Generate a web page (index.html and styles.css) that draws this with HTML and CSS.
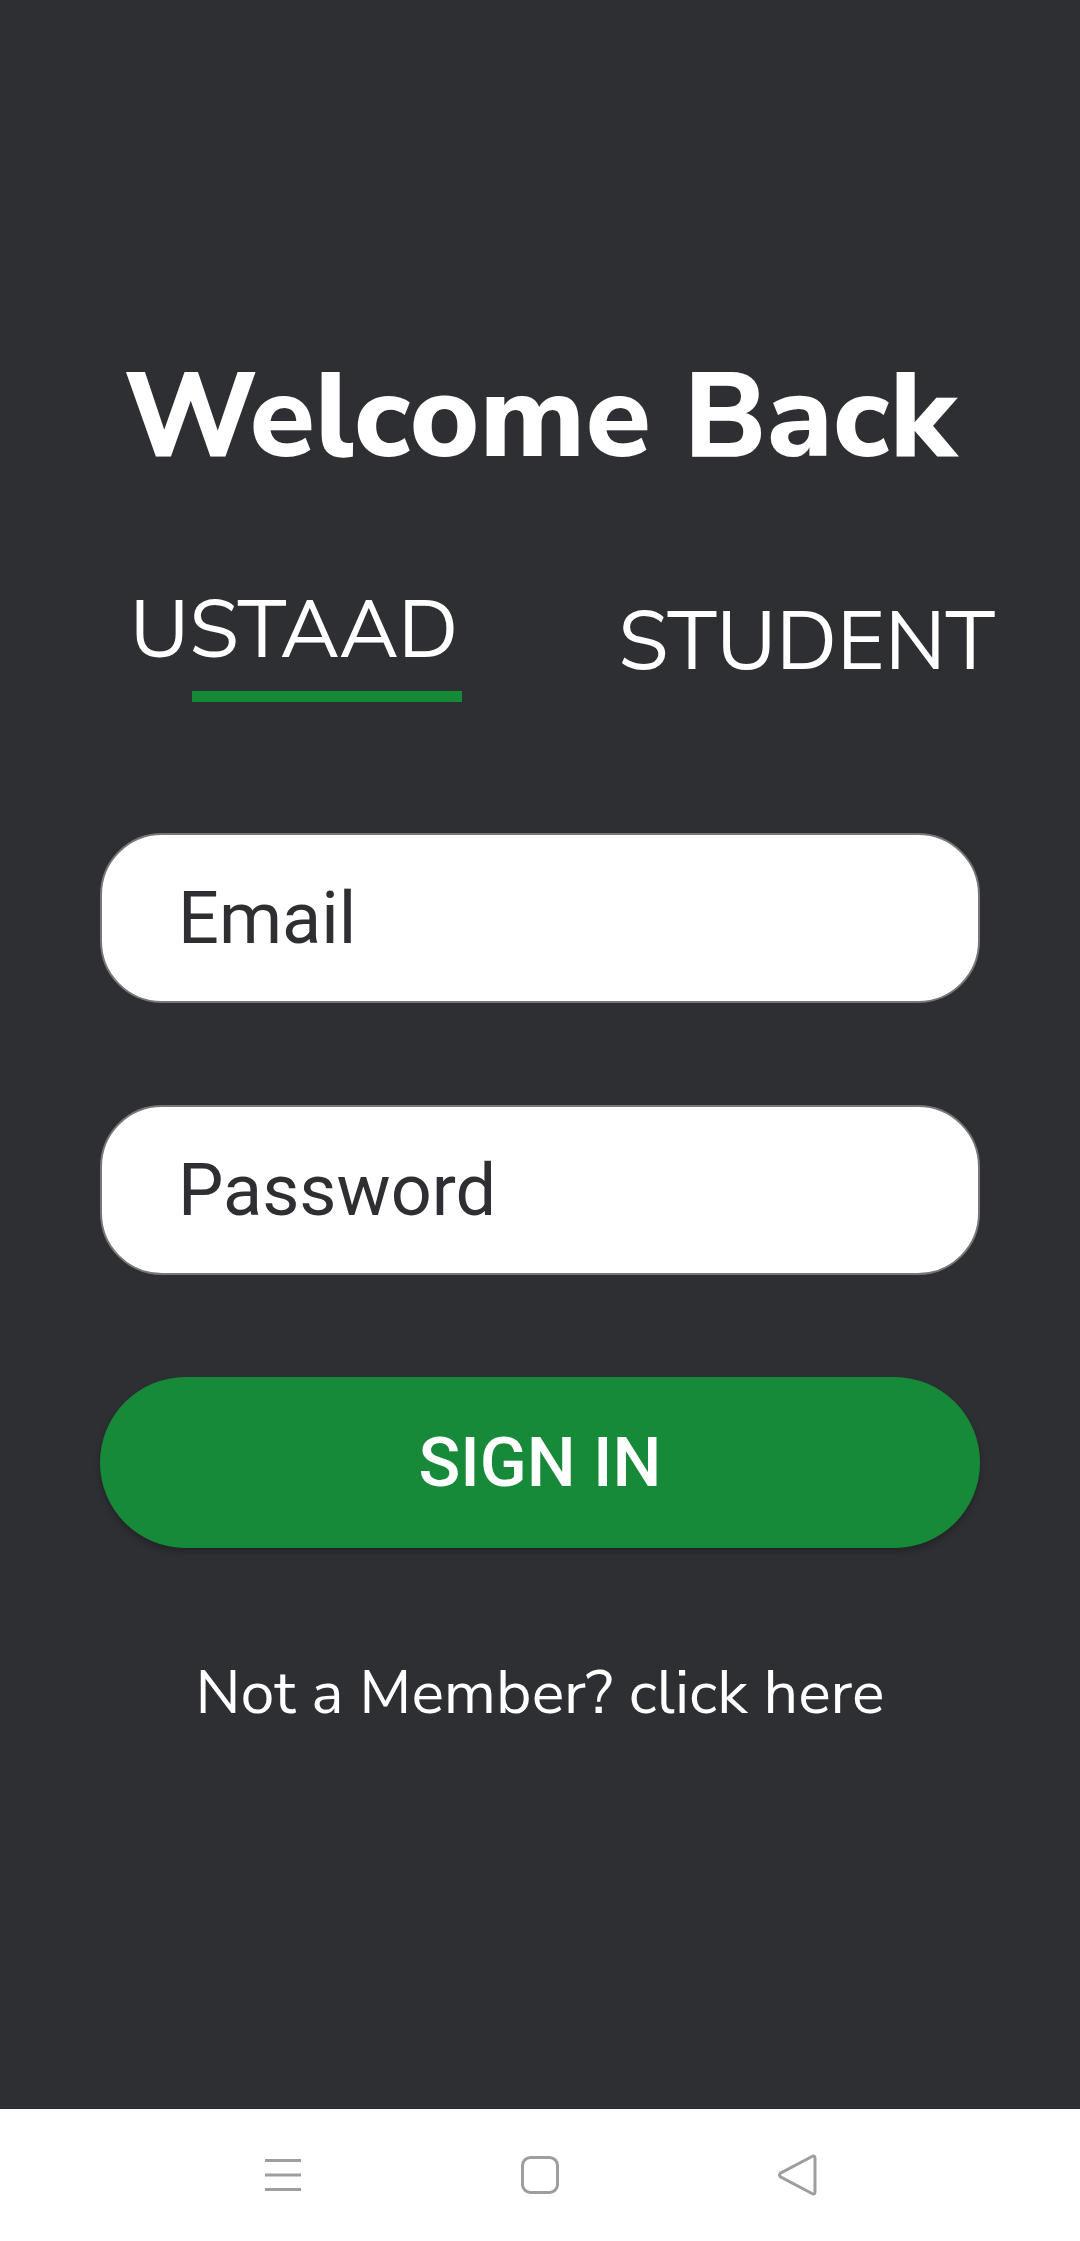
FILE: index.html
```html
<!DOCTYPE html>
<html lang="en">

<head>
    <meta charset="UTF-8">
    <meta name="viewport" content="width=device-width, initial-scale=1.0">
    <title>Welcome Back</title>
    <link rel="stylesheet" href="styles.css">
</head>

<body>
    <div class="screen">
        <h1 class="title">Welcome Back</h1>

        <!-- Role tabs -->
        <div class="tabs">
            <div class="tab active">
                <span class="tab-label">USTAAD</span>
                <div class="tab-line"></div>
            </div>
            <div class="tab">
                <span class="tab-label">STUDENT</span>
            </div>
        </div>

        <!-- Login form -->
        <form class="form">
            <input type="email" class="field" placeholder="Email">
            <input type="password" class="field" placeholder="Password">
            <button type="button" class="btn-signin">SIGN IN</button>
        </form>

        <p class="member">Not a Member? click here</p>
    </div>

    <!-- System navigation bar -->
    <div class="navbar">
        <div class="nav-btn">
            <svg width="38" height="34" viewBox="0 0 38 34">
                <path d="M1 2.5H37M1 17H37M1 31.5H37" stroke="#9e9e9e" stroke-width="3" fill="none" />
            </svg>
        </div>
        <div class="nav-btn">
            <svg width="38" height="38" viewBox="0 0 38 38">
                <rect x="1.5" y="1.5" width="35" height="35" rx="8" stroke="#9e9e9e" stroke-width="3" fill="none" />
            </svg>
        </div>
        <div class="nav-btn">
            <svg width="40" height="42" viewBox="0 0 40 42">
                <path d="M35 2.5Q38 1 38 4.5V37.5Q38 41 35 39.5L3.5 22.8Q1.5 21 3.5 19.2Z" stroke="#9e9e9e" stroke-width="3" stroke-linejoin="round" fill="none" />
            </svg>
        </div>
    </div>
</body>

</html>
```

FILE: styles.css
```css
* {
    margin: 0;
    padding: 0;
    box-sizing: border-box;
}

body {
    font-family: "Nunito Sans", "Nunito", "Open Sans", sans-serif;
    background: #2e2f33;
    color: #ffffff;
    width: 1080px;
    height: 2241px;
    overflow: hidden;
}

.screen {
    height: 2109px;
    display: flex;
    flex-direction: column;
}

.title {
    margin-top: 358px;
    font-size: 119px;
    line-height: 1;
    font-weight: 800;
    text-align: center;
}

.tabs {
    display: flex;
    margin-top: 113px;
    padding-left: 130px;
}

.tab {
    display: flex;
    flex-direction: column;
}

.tab-label {
    font-size: 82px;
    line-height: 1;
    font-weight: 400;
}

.tab.active .tab-label {
    font-size: 81px;
}

.tab-line {
    width: 270px;
    height: 11px;
    margin-top: 20px;
    margin-left: 62px;
    background: #178a3a;
}

.tab + .tab {
    margin-top: 11px;
    margin-left: 156px;
}

.form {
    display: flex;
    flex-direction: column;
    gap: 102px;
    padding: 0 100px;
    margin-top: 131px;
}

.field {
    height: 170px;
    width: 100%;
    border: 2px solid #777777;
    border-radius: 62px;
    background: #ffffff;
    padding-left: 76px;
    font-family: Roboto, sans-serif;
    font-size: 72px;
    color: #2e2f33;
    outline: none;
}

.field::placeholder {
    color: #2e2f33;
    opacity: 1;
}

.btn-signin {
    height: 171px;
    width: 100%;
    border: none;
    border-radius: 86px;
    background: #178a3a;
    color: #ffffff;
    font-family: Roboto, sans-serif;
    font-weight: 500;
    font-size: 69px;
    box-shadow: 0 4px 6px rgba(0, 0, 0, 0.25);
    cursor: pointer;
}

.member {
    margin-top: 115px;
    font-size: 61px;
    line-height: 1;
    text-align: center;
}

.navbar {
    height: 132px;
    background: #ffffff;
    display: flex;
    justify-content: center;
    align-items: center;
    gap: 197px;
}

.nav-btn {
    width: 60px;
    display: flex;
    justify-content: center;
    align-items: center;
}
```
